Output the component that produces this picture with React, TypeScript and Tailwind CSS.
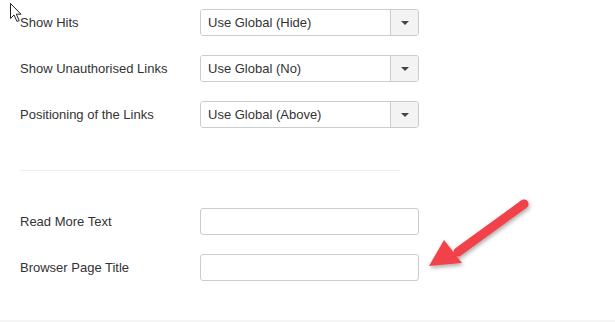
const selects = [
  { label: "Show Hits", value: "Use Global (Hide)" },
  { label: "Show Unauthorised Links", value: "Use Global (No)" },
  { label: "Positioning of the Links", value: "Use Global (Above)" },
];

const inputs = ["Read More Text", "Browser Page Title"];

const Cursor = () => (
  <svg
    className="absolute left-[9px] top-[2px]"
    width="14"
    height="21"
    viewBox="0 0 14 21"
  >
    <path
      d="M1.5 1.5 L1.5 16.5 L5 13 L8 19.5 L10.2 18.5 L7.3 12.2 L12 12.2 Z"
      fill="#fff"
      stroke="#222"
      strokeWidth="1"
      strokeLinejoin="round"
    />
  </svg>
);

const Arrow = () => (
  <svg
    className="absolute left-[420px] top-[192px]"
    width="120"
    height="85"
    viewBox="0 0 120 85"
  >
    <defs>
      <filter id="sh" x="-20%" y="-20%" width="140%" height="140%">
        <feDropShadow dx="1" dy="2" stdDeviation="2" floodColor="#000" floodOpacity="0.35" />
      </filter>
    </defs>
    <g filter="url(#sh)">
      <line
        x1="104"
        y1="12"
        x2="38"
        y2="60"
        stroke="#f1434a"
        strokeWidth="9"
        strokeLinecap="round"
      />
      <polygon points="9,74 24,48 42,71" fill="#f1434a" />
    </g>
  </svg>
);

const App = () => {
  return (
    <div className="relative w-[615px] h-[322px] bg-white font-['Liberation_Sans',Arial,sans-serif] text-[13px] text-[#333]">
      <Cursor />
      <div className="pl-5 pt-[9px]">
        <div className="flex flex-col gap-[19px]">
          {selects.map((s) => (
            <div key={s.label} className="flex items-center h-[27px]">
              <div className="w-[180px]">{s.label}</div>
              <div className="flex w-[219px] h-[27px] border border-[#ccc] rounded-[3px] overflow-hidden">
                <div className="flex-1 flex items-center pl-[7px] bg-white">{s.value}</div>
                <div className="w-[28px] flex items-center justify-center bg-[#f3f3f3] border-l border-[#ccc]">
                  <div className="w-0 h-0 border-l-[4px] border-r-[4px] border-t-[4px] border-l-transparent border-r-transparent border-t-[#444]" />
                </div>
              </div>
            </div>
          ))}
        </div>

        <div className="mt-[42px] w-[380px] h-px bg-[#eee]" />

        <div className="mt-[37px] flex flex-col gap-[19px]">
          {inputs.map((l) => (
            <div key={l} className="flex items-center h-[27px]">
              <div className="w-[180px]">{l}</div>
              <div className="w-[219px] h-[27px] border border-[#ccc] rounded-[3px] bg-white" />
            </div>
          ))}
        </div>
      </div>
      <Arrow />
      <div className="absolute left-0 right-0 bottom-0 h-[2px] bg-[#f5f5f5]" />
    </div>
  );
};

export default App;
